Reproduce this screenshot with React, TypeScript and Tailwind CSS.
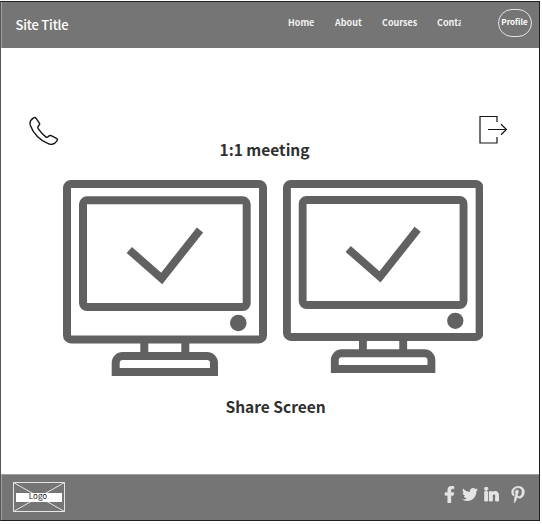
import { FaFacebookF, FaTwitter, FaLinkedinIn, FaPinterestP } from "react-icons/fa";

function Monitor({ className }: { className: string }) {
  return (
    <svg viewBox="0 0 204 196" preserveAspectRatio="none" className={className} fill="none" stroke="#616161" strokeWidth="8">
      <rect x="4" y="4" width="196" height="155.4" rx="4" />
      <rect x="20" y="20.3" width="163.7" height="106.7" rx="4" />
      <path d="M66.3 70 98.7 98.4 137 50" />
      <circle cx="175.3" cy="143" r="8.3" fill="#616161" stroke="none" />
      <path d="M81.3 163v10M122.3 163v10" />
      <path d="M52.7 192v-9a7 7 0 0 1 7-7h84.300a7 7 0 0 1 7 7v9z" />
    </svg>
  );
}

function PhoneIcon() {
  return (
    <svg viewBox="0 0 30 30" className="h-[30px] w-[30px]" fill="none" stroke="#151515" strokeWidth="1.4" strokeLinejoin="round">
      <path d="M4.600 2.900 Q6 1.900 7.100 3.400 L10.400 8.200 Q11 9.300 10 10.300 Q8.200 12.100 9.200 13.700 Q12.500 18.600 16.800 21.900 Q18.100 22.900 19.300 21.500 Q20.700 20 22.200 20.700 L27.500 23.400 Q29 24.200 28 25.700 C25.900 29.200 23.100 30.200 19.200 28.700 C11.500 25.700 4 18.500 1.300 10.300 C.3 6.700 2 4.500 4.600 2.900Z" />
    </svg>
  );
}

function ExitIcon() {
  return (
    <svg viewBox="0 0 30 30" className="h-[30px] w-[30px]" fill="none" stroke="#151515" strokeWidth="1.2">
      <path d="M18 7V1.500H1v26.500h17V22" />
      <path d="M9 14.500H27.500M22 9.200l5.500 5.300-5.500 5.300" />
    </svg>
  );
}

export default function App() {
  return (
    <div className="h-[524px] w-[542px] overflow-hidden bg-white pt-px font-['Noto_Sans_CJK_SC',sans-serif]">
      <div className="flex h-[520px] w-[540px] flex-col border border-[#202020] border-l-[#555555]">
        <header className="flex h-[46px] shrink-0 border-l border-[#a0a0a0] bg-[#757575] text-white">
          <h1 className="ml-[13.5px] mt-[13px] w-[272.5px] text-[13px] leading-5 font-medium tracking-[-0.2px]">Site Title</h1>
          <nav className="mt-[14px] flex text-[9px] leading-[14px] font-bold text-[#f2f2f2]">
            <span className="w-[47px]">Home</span>
            <span className="w-[47px]">About</span>
            <span className="w-[55px]">Courses</span>
            <span className="w-[24px] overflow-hidden whitespace-nowrap">Conta</span>
          </nav>
          <button className="ml-[37px] mt-[7px] flex h-[28px] w-[34px] items-center justify-center rounded-[14px] border border-[#e5e5e5] pr-px pb-[2px] text-[8px] leading-3 font-bold">
            Profile
          </button>
        </header>
        <main className="flex h-[426px] shrink-0 flex-col">
          <div className="mt-[67px] flex h-[30px] justify-between pl-[28px] pr-[30px]">
            <PhoneIcon />
            <ExitIcon />
          </div>
          <h2 className="-mt-[8px] ml-[218.5px] text-[15.5px] leading-[24px] font-bold text-[#303030]">1:1 meeting</h2>
          <div className="mt-[19px] flex h-[196px] items-start pl-[62px]">
            <Monitor className="h-[196px] w-[204px]" />
            <Monitor className="ml-[15.500px] h-[193px] w-[200.5px]" />
          </div>
          <h2 className="mt-[18px] ml-[224.5px] text-[15.5px] leading-[24px] font-bold text-[#303030]">Share Screen</h2>
        </main>
        <footer className="flex h-[46px] shrink-0 border-l border-t border-[#a0a0a0] bg-[#757575]">
          <div className="relative ml-[11px] mt-[7px] h-[30px] w-[52px]">
            <svg viewBox="0 0 52 30" className="h-[30px] w-[52px]" fill="none" stroke="#e5e5e5">
              <path d="M.5.5h51v29H.5zM.5.5l51 29M51.500.5l-51 29" />
            </svg>
            <span className="absolute left-[3px] top-[10.5px] flex h-[9px] w-[46px] items-center justify-center bg-white pr-[2px] pb-[2px] text-[8px] leading-none text-[#181818]">Logo</span>
          </div>
          <div className="ml-[379px] mt-[11px] flex items-start text-[#e5e5e5]">
            <FaFacebookF className="h-[17px] w-[11px]" stroke="currentColor" strokeWidth="10" />
            <FaTwitter className="ml-[7px] h-[17px] w-[16px]" />
            <FaLinkedinIn className="ml-[6px] mt-px h-[16px] w-[15px]" stroke="currentColor" strokeWidth="30" />
            <FaPinterestP className="ml-[12px] h-[17px] w-[14px]" stroke="currentColor" strokeWidth="14" />
          </div>
        </footer>
      </div>
    </div>
  );
}
